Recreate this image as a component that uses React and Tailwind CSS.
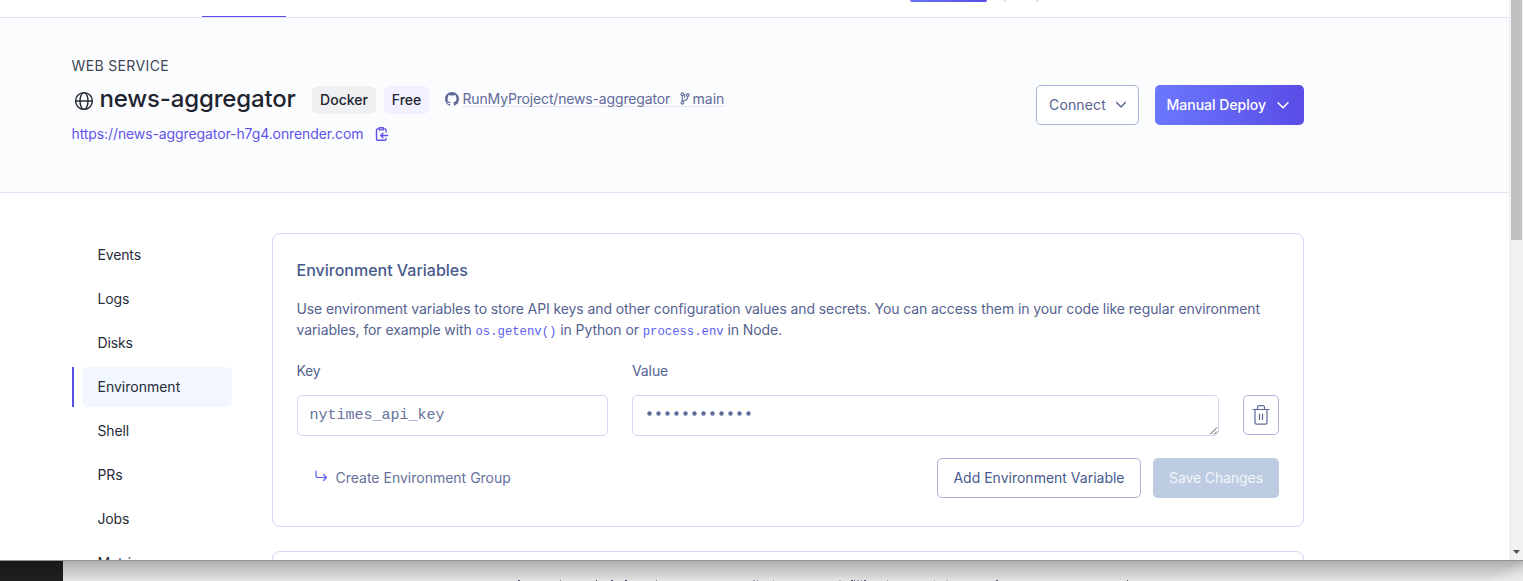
import React from "react";

const NAV_ITEMS = ["Events", "Logs", "Disks", "Environment", "Shell", "PRs", "Jobs", "Metrics"];

const Chevron = ({ className }) => (
  <svg viewBox="0 0 12 8" className={className} fill="none" stroke="currentColor" strokeWidth="1.4" strokeLinecap="round" strokeLinejoin="round">
    <path d="M1.6 1.6 6 6l4.4-4.400" />
  </svg>
);

const GlobeIcon = () => (
  <svg viewBox="0 0 20 20" className="size-5 shrink-0" fill="none" stroke="currentColor" strokeWidth="1.4">
    <circle cx="10" cy="10" r="8.4" />
    <ellipse cx="10" cy="10" rx="4" ry="8.4" />
    <path d="M1.6 10h16.8" />
  </svg>
);

const GithubIcon = () => (
  <svg viewBox="0 0 16 16" className="size-3.5 shrink-0" fill="currentColor">
    <path d="M8 0C3.58 0 0 3.58 0 8c0 3.54 2.29 6.53 5.47 7.59.4.07.55-.17.55-.38 0-.19-.01-.82-.01-1.49-2.01.37-2.53-.49-2.69-.94-.09-.23-.48-.94-.82-1.13-.28-.15-.68-.52-.01-.53.63-.01 1.08.58 1.23.82.72 1.21 1.87.87 2.33.66.07-.52.28-.87.51-1.07-1.78-.2-3.64-.89-3.64-3.95 0-.87.31-1.59.82-2.15-.08-.2-.36-1.02.08-2.12 0 0 .67-.21 2.2.82.64-.18 1.32-.27 2-.27s1.36.09 2 .27c1.53-1.04 2.2-.82 2.2-.82.44 1.1.16 1.92.08 2.12.51.56.82 1.27.82 2.15 0 3.07-1.87 3.75-3.65 3.95.29.25.54.73.54 1.48 0 1.07-.01 1.93-.01 2.2 0 .21.15.46.55.38A8.01 8.01 0 0 0 16 8c0-4.42-3.58-8-8-8Z" />
  </svg>
);

const BranchIcon = () => (
  <svg viewBox="0 0 10 13" className="h-[13px] w-2.5 shrink-0" fill="none" stroke="currentColor" strokeWidth="1.1">
    <circle cx="2.3" cy="2.2" r="1.3" />
    <circle cx="7.8" cy="2.9" r="1.3" />
    <circle cx="2.3" cy="10.8" r="1.3" />
    <path d="M2.3 3.5v6M7.8 4.2c0 3-1.8 4-3.3 4.300-1.300.3-2.200.4-2.200 1M4.700 2v4" />
  </svg>
);

const ClipboardIcon = () => (
  <svg viewBox="0 0 14 14" className="size-3.5 shrink-0" fill="none" stroke="currentColor" strokeWidth="1.4" strokeLinecap="round" strokeLinejoin="round">
    <path d="M3.8 1.900H2.700a1.200 1.200 0 0 0-1.200 1.200v9a1.200 1.200 0 0 0 1.200 1.200h7.200a1.200 1.200 0 0 0 1.200-1.200v-.6M8.800 1.900h1.100a1.200 1.200 0 0 1 1.200 1.200v2" />
    <path d="M4.300.8h4v2.100h-4zM12.700 8.500H6M8 6.300 5.700 8.500 8 10.700" />
  </svg>
);

const TrashIcon = () => (
  <svg viewBox="0 0 18 20" className="h-5 w-[18px]" fill="none" stroke="currentColor" strokeWidth="1.2" strokeLinecap="round" strokeLinejoin="round">
    <path d="M1 4.500h16M5.500 4.500V2.200a1.500 1.500 0 0 1 1.500-1.500h4a1.500 1.500 0 0 1 1.500 1.500v2.300M3 4.500v13a1.600 1.600 0 0 0 1.600 1.600h8.800a1.600 1.600 0 0 0 1.600-1.600v-13M7.500 9v5.500M10.500 9v5.500" />
  </svg>
);

const TurnArrow = () => (
  <svg viewBox="0 0 13 12" className="h-3 w-[13px]" fill="none" stroke="currentColor" strokeWidth="1.2" strokeLinecap="round" strokeLinejoin="round">
    <path d="M1 1v4.500a2 2 0 0 0 2 2h8.500M8.500 4.500l3 3-3 3" />
  </svg>
);

function TopBar() {
  return (
    <div className="flex h-[18px] shrink-0 items-start border-b border-[#e1e4f7] bg-white">
      <div className="ml-[202px] h-[17px] w-[84px] border-b border-[#5b4ee6]" />
      <div className="ml-[624px] h-0.5 w-[77px] rounded-b-[3px] bg-linear-to-r from-[#6875ff] to-[#594be5]" />
      <div className="ml-4 flex h-0.5 w-[36px] justify-between">
        <span className="h-0.5 w-[3px] rounded-bl-[3px] bg-[#e4e1fb]" />
        <span className="h-0.5 w-[3px] rounded-br-[3px] bg-[#e4e1fb]" />
      </div>
    </div>
  );
}

function ServiceHeader() {
  return (
    <header className="flex h-[175px] shrink-0 justify-between border-b border-[#dce4f5] bg-[#fbfcfe] pr-[205px] pl-[71.500px]">
      <div className="flex flex-col pt-[38px]">
        <p className="h-5 text-[14px] leading-5 tracking-[0.36px] text-[#3f4657]">WEB SERVICE</p>
        <div className="mt-[7px] flex h-[34px] items-center">
          <div className="flex items-center pb-0.5 text-[#1f2430]">
            <div className="mt-1 ml-[2.500px]"><GlobeIcon /></div>
            <h1 className="ml-[5.500px] w-[196px] text-[24px] leading-8 font-medium tracking-[-0.16px] whitespace-nowrap">news-aggregator</h1>
          </div>
          <span className="ml-[16.500px] flex h-7 w-16 items-center justify-center rounded-md bg-[#eff0f2] pb-0.5 text-[14px] font-medium text-[#1f2430]">Docker</span>
          <span className="ml-2 flex h-7 w-[45px] items-center justify-center rounded-md bg-[#f2f1ff] pb-0.5 text-[14px] font-medium text-[#1f2430]">Free</span>
          <a className="ml-4 flex items-center text-[14px] text-[#616b99]">
            <span className="-mt-0.5"><GithubIcon /></span>
            <span className="-mt-[5px] ml-[3.500px] flex h-[19px] items-center border-b border-[#e4e7ef] pt-1 pb-0.5 leading-4 tracking-[-0.16px]">
              <span className="mt-0.5 w-[208px] whitespace-nowrap">RunMyProject/news-aggregator</span>
              <span className="ml-[9.500px]"><BranchIcon /></span>
              <span className="mt-0.5 ml-[2.500px] w-8 tracking-normal">main</span>
            </span>
          </a>
        </div>
        <div className="mt-[7px] flex items-center text-[14px] leading-5 text-[#5f54ea]">
          <a className="w-[292px] tracking-[-0.1px] whitespace-nowrap">https://news-aggregator-h7g4.onrender.com</a>
          <span className="ml-[11px]"><ClipboardIcon /></span>
        </div>
      </div>
      <div className="flex gap-4 pt-[67px]">
        <button className="flex h-10 w-[103px] items-center rounded-[5px] border border-[#a9b3da] bg-white pb-0.5 pl-3 text-[14px] tracking-[0.15px] text-[#556391]">
          Connect
          <Chevron className="mt-0.5 ml-[9px] h-2 w-3" />
        </button>
        <button className="flex h-10 w-[149px] items-center rounded-[5px] bg-linear-to-r from-[#6b77ff] to-[#5a4ce6] pb-0.5 pl-[11.500px] text-[14px] font-medium text-white">
          Manual Deploy
          <Chevron className="mt-0.5 ml-2.5 h-[9px] w-3.5" />
        </button>
      </div>
    </header>
  );
}

function Sidebar() {
  return (
    <nav className="flex w-[160px] shrink-0 flex-col gap-1 text-[14px] text-[#262c38]">
      {NAV_ITEMS.map((item) =>
        item === "Environment" ? (
          <div key={item} className="flex h-10 shrink-0 border-l-2 border-[#5b4ee6] pl-2">
            <a className="flex w-[150px] items-center rounded-md bg-[#f2f6ff] pb-0.5 pl-[15.500px]">{item}</a>
          </div>
        ) : (
          <a key={item} className="flex h-10 shrink-0 items-center pb-0.5 pl-[25.500px] tracking-[-0.15px]">{item}</a>
        )
      )}
    </nav>
  );
}

const Code = ({ children }) => (
  <code className="font-['Liberation_Mono',monospace] text-[12.250px] tracking-normal text-[#5a5ff0]">{children}</code>
);

function VariablesCard() {
  return (
    <section className="h-[294px] w-[1032px] shrink-0 rounded-lg border border-[#cfdaf0] px-6 pt-[26px] text-[14px] text-[#556391]">
      <h2 className="-ml-[0.500px] text-[16px] leading-5 font-medium text-[#485a8c]">Environment Variables</h2>
      <p className="mt-[18px] -ml-[0.500px] leading-[21px] tracking-[-0.092px] whitespace-nowrap">
        Use environment variables to store API keys and other configuration values and secrets. You can access them in your code like regular environment
        <br />
        variables, for example with <Code>os.getenv()</Code> in Python or <Code>process.env</Code> in Node.
      </p>
      <div className="mt-[18px] flex gap-6">
        <label className="flex w-[311px] flex-col">
          <span className="-ml-[0.500px] leading-5 tracking-[-0.3px]">Key</span>
          <span className="mt-3.5 flex h-[41px] items-center rounded-[5px] border border-[#cfdaf0] pt-px pl-[11.500px] font-['Liberation_Mono',monospace] text-[15px] text-[#66719d]">nytimes_api_key</span>
        </label>
        <label className="flex w-[587px] flex-col">
          <span className="leading-5 tracking-[-0.1px]">Value</span>
          <span className="mt-3.5 flex h-[41px] items-center justify-between rounded-[5px] border border-[#cfdaf0] pl-[13.500px] text-[#626c9c]">
            <svg viewBox="0 0 108 5" className="mb-1 h-[5px] w-[108px]" fill="currentColor">
              {Array.from({ length: 12 }, (_, i) => <circle key={i} cx={2.5 + i * 9} cy="2.500" r="2.200" />)}
            </svg>
            <svg viewBox="0 0 8 8" className="size-2 self-end text-[#4a4a4a]" fill="none" stroke="currentColor" strokeWidth="1">
              <path d="M0 7.500 7 .5M4 7.500 7 4.500" />
            </svg>
          </span>
        </label>
        <button className="mt-[34px] flex h-10 w-9 items-center justify-center rounded-[5px] border border-[#a9b3da] text-[#5f6a9a]">
          <TrashIcon />
        </button>
      </div>
      <div className="mt-[22px] flex h-10 items-center">
        <span className="mb-1 ml-[17.500px] text-[#5a5ff0]"><TurnArrow /></span>
        <a className="ml-2 pb-0.5 text-[#66719d]">Create Environment Group</a>
        <button className="ml-auto flex h-10 w-[204px] items-center justify-center rounded-[5px] border border-[#a9b3da] pb-0.5 text-[#485a8c]">Add Environment Variable</button>
        <button className="ml-3 flex h-10 w-[126px] items-center justify-center rounded-[5px] bg-[#becce2] pb-0.5 tracking-[-0.1px] text-[#f1f5fb]">Save Changes</button>
      </div>
    </section>
  );
}

function Scrollbar() {
  return (
    <div className="flex w-3.5 shrink-0 flex-col items-center justify-between bg-[#f1f1f1] pb-1.5">
      <div className="ml-px h-60 w-[11px] bg-[#c1c1c1]" />
      <svg viewBox="0 0 7 4" className="ml-px h-1 w-[7px]" fill="#505050"><path d="M0 0h7L3.500 4z" /></svg>
    </div>
  );
}

// Tips of the ascenders of the line of text behind the window: [x, width, colour].
const ASCENDERS = [
  [518, 2, "#4a5068"], [560, 1, "#8c8c94"], [596, 1, "#3a4058"], [611, 2, "#4a5068"], [625, 2, "#3a4058"],
  [656, 1, "#8c8c94"], [753, 2, "#8f96b4"], [757, 1, "#8f96b4"], [773, 1, "#b4b4b4"], [839, 2, "#b4b4b4"],
  [851, 2, "#4a4a58"], [854, 1, "#3a4898"], [857, 2, "#8f96b4"], [861, 1, "#8f96b4"], [864, 2, "#4a5068"],
  [887, 1, "#a0a0a0"], [934, 1, "#b4b4b4"], [946, 2, "#c0c0c0"], [996, 2, "#4a5068"],
  [1127, 1, "#4a5068"],
];

export default function App() {
  return (
    <div className="flex h-[581px] w-[1523px] flex-col overflow-hidden bg-[#d0d0d0] font-['Inter','Liberation_Sans',sans-serif]">
      <div className="flex h-[560px] shrink-0 overflow-hidden bg-white">
        <div className="flex w-[1509px] shrink-0 flex-col overflow-hidden">
          <TopBar />
          <ServiceHeader />
          <main className="flex min-h-0 flex-1 gap-10 overflow-hidden pt-10 pl-[72px]">
            <div className="pt-0.5"><Sidebar /></div>
            <div className="flex flex-col gap-6">
              <VariablesCard />
              <section className="h-40 w-[1032px] shrink-0 rounded-lg border border-[#cfdaf0]" />
            </div>
          </main>
        </div>
        <Scrollbar />
      </div>
      <footer className="flex h-[21px] shrink-0 overflow-hidden border-t border-[#929492]">
        <div className="w-[63px] bg-linear-to-b from-[#17191b] to-[#1e2022]" />
        <div className="flex flex-1 items-end justify-between bg-linear-to-b from-[#b1b1b1] to-[#e3e3e3]">
          <svg viewBox="63 0 1420 1" className="h-px w-[1420px]">
            {ASCENDERS.map(([x, w, fill]) => <rect key={x} x={x} y="0" width={w} height="1" fill={fill} />)}
          </svg>
          <div className="h-5 w-10 bg-linear-to-br from-transparent from-45% to-[#ececec]" />
        </div>
      </footer>
    </div>
  );
}
